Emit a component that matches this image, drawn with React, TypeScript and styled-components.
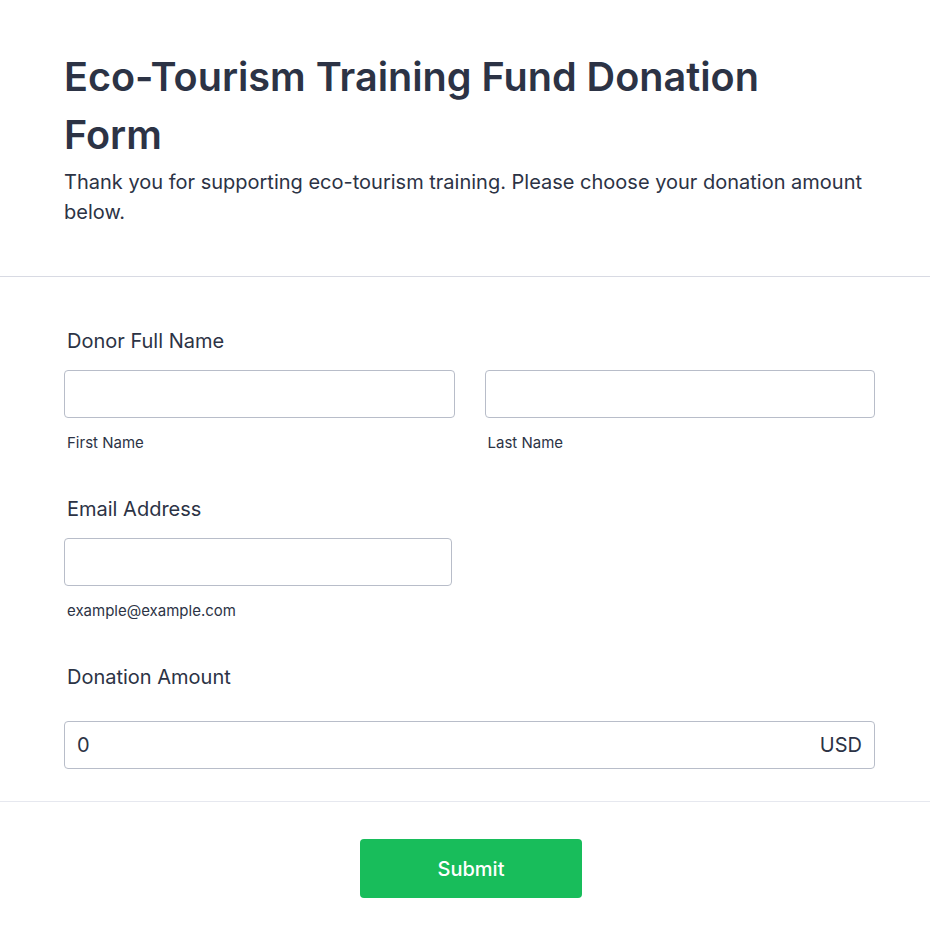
import React from "react";
import styled, { createGlobalStyle } from "styled-components";

const GlobalStyle = createGlobalStyle`
  * { box-sizing: border-box; }
  body {
    margin: 0;
    background: #ffffff;
    font-family: Inter, "Noto Sans", sans-serif;
    color: #2c3345;
  }
`;

export default function App() {
  return (
    <>
      <GlobalStyle />
      <Page>
        <Header>
          <Title>Eco-Tourism Training Fund Donation Form</Title>
          <Description>
            Thank you for supporting eco-tourism training. Please choose your
            donation amount below.
          </Description>
        </Header>
        <FormBody>
          <Field>
            <Label>Donor Full Name</Label>
            <Row>
              <Column>
                <TextInput type="text" />
                <SubLabel>First Name</SubLabel>
              </Column>
              <Column>
                <TextInput type="text" />
                <SubLabel>Last Name</SubLabel>
              </Column>
            </Row>
          </Field>
          <Field>
            <Label>Email Address</Label>
            <Column $width="388px">
              <TextInput type="email" />
              <SubLabel>example@example.com</SubLabel>
            </Column>
          </Field>
          <Field>
            <Label $gap="30px">Donation Amount</Label>
            <AmountBox>
              <AmountInput type="text" defaultValue="0" />
              <Currency>USD</Currency>
            </AmountBox>
          </Field>
        </FormBody>
        <Footer>
          <SubmitButton type="button">Submit</SubmitButton>
        </Footer>
      </Page>
    </>
  );
}

const Page = styled.div`
  width: 930px;
  min-height: 947px;
  background: #ffffff;
`;

const Header = styled.div`
  padding: 48px 64px 49px 64px;
  border-bottom: 1px solid #d8dae3;
`;

const Title = styled.h1`
  margin: 0;
  font-size: 39.6px;
  line-height: 58px;
  font-weight: 600;
  color: #2c3345;
  max-width: 740px;
`;

const Description = styled.p`
  margin: 3px 0 0 0;
  font-size: 20px;
  line-height: 30px;
  font-weight: 400;
  color: #2c3345;
`;

const FormBody = styled.div`
  padding: 50px 55px 32px 64px;
  display: flex;
  flex-direction: column;
  gap: 42px;
  border-bottom: 1px solid #e6e8ef;
`;

const Field = styled.div`
  display: flex;
  flex-direction: column;
`;

const Label = styled.label<{ $gap?: string }>`
  display: block;
  padding-left: 3px;
  margin-bottom: ${(p) => p.$gap ?? "15px"};
  font-size: 20px;
  line-height: 28px;
  font-weight: 400;
  color: #2c3345;
`;

const Row = styled.div`
  display: flex;
  gap: 30px;
`;

const Column = styled.div<{ $width?: string }>`
  display: flex;
  flex-direction: column;
  width: ${(p) => p.$width ?? "auto"};
  flex: ${(p) => (p.$width ? "none" : "1")};
`;

const TextInput = styled.input`
  width: 100%;
  height: 48px;
  border: 1px solid #b8bdc9;
  border-radius: 4px;
  padding: 0 12px;
  font-family: Inter, "Noto Sans", sans-serif;
  font-size: 16px;
  color: #2c3345;
  background: #ffffff;
  outline: none;
`;

const SubLabel = styled.span`
  display: block;
  margin-top: 15px;
  padding-left: 3px;
  font-size: 15px;
  line-height: 20px;
  color: #2c3345;
`;

const AmountBox = styled.div`
  display: flex;
  align-items: center;
  height: 48px;
  border: 1px solid #b8bdc9;
  border-radius: 4px;
  padding: 0 12px 0 12px;
  background: #ffffff;
`;

const AmountInput = styled.input`
  flex: 1;
  border: none;
  outline: none;
  padding: 0;
  font-family: Inter, "Noto Sans", sans-serif;
  font-size: 20px;
  color: #2c3345;
  background: transparent;
`;

const Currency = styled.span`
  font-size: 20px;
  color: #2c3345;
`;

const Footer = styled.div`
  display: flex;
  justify-content: center;
  padding: 37px 0 50px 12px;
`;

const SubmitButton = styled.button`
  width: 222px;
  height: 59px;
  border: none;
  border-radius: 4px;
  background: #18bd5b;
  color: #ffffff;
  font-family: Inter, "Noto Sans", sans-serif;
  font-size: 20px;
  font-weight: 500;
  cursor: pointer;
`;
